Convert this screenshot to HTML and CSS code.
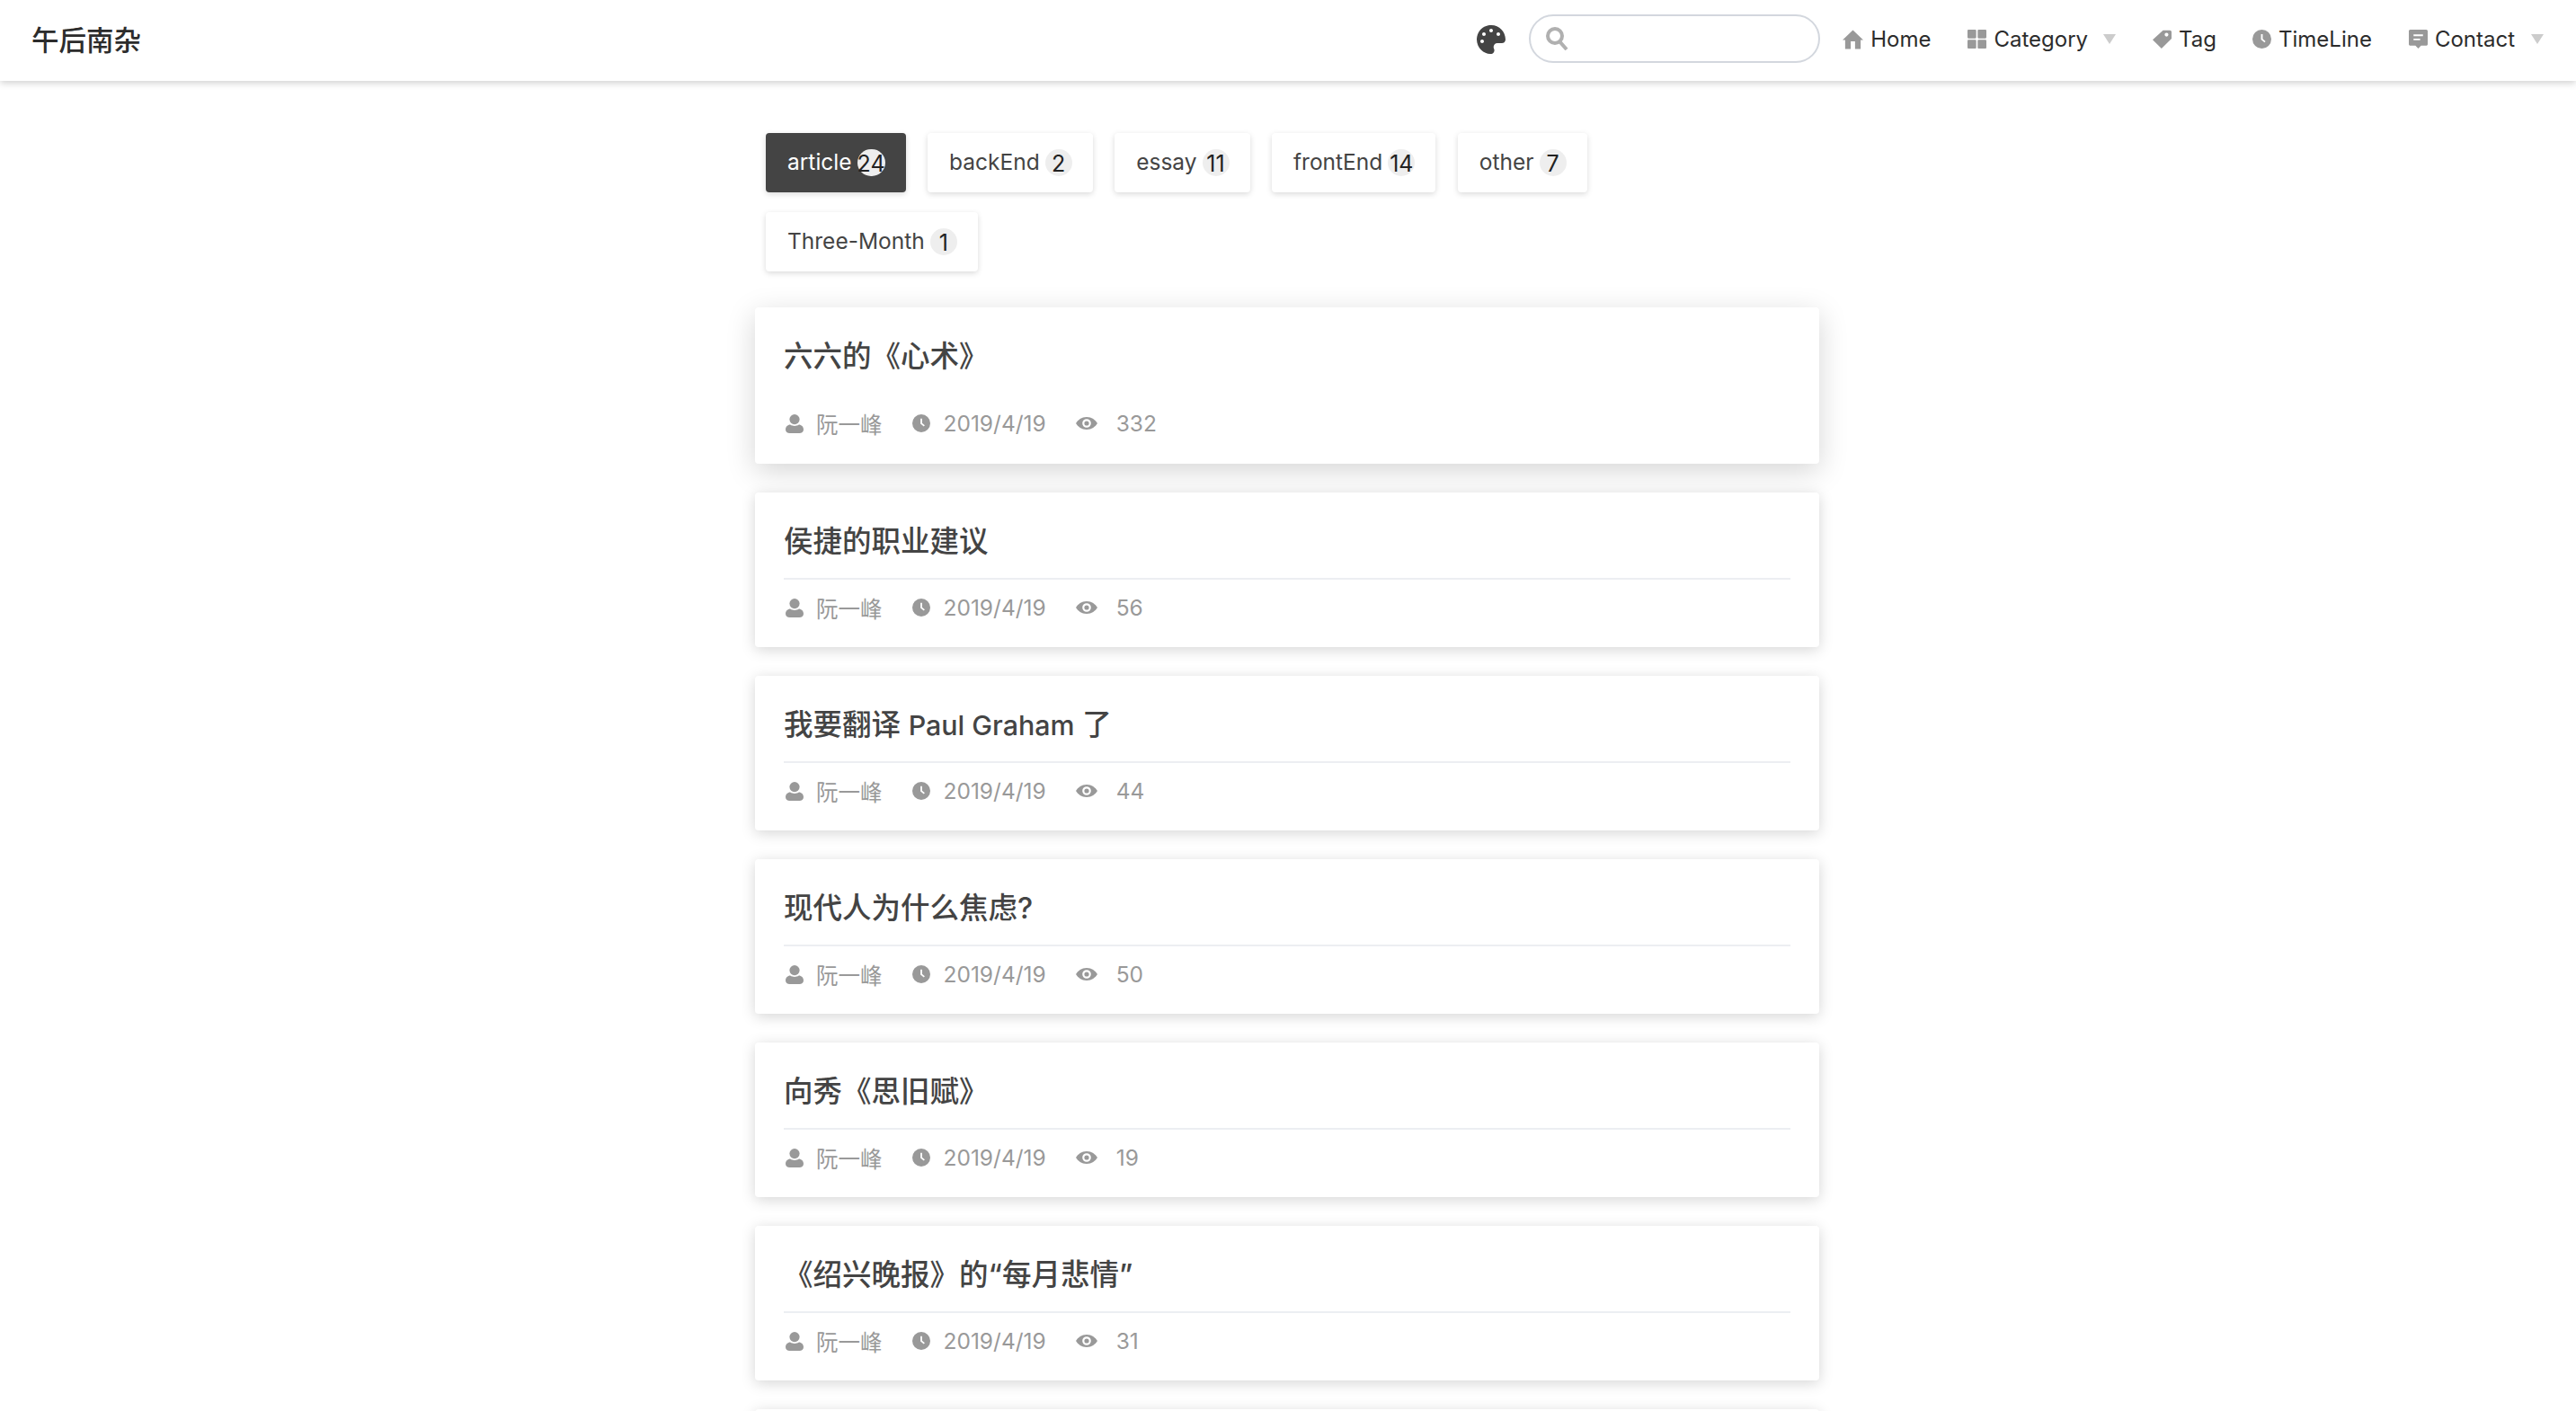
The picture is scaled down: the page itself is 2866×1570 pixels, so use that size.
FILE: index.html
```html
<!DOCTYPE html>
<html lang="en">
<head>
    <meta charset="UTF-8">
    <meta name="viewport" content="width=device-width, initial-scale=1.0">
    <title>午后南杂</title>
    <link rel="stylesheet" href="styles.css">
</head>
<body>
    <svg class="icon-defs" width="0" height="0">
        <symbol id="i-user" viewBox="0 0 20 21"><circle cx="10" cy="5.600" r="5.600"/><path d="M0 17C0 14 2.500 11.600 5.200 11.600c1.500 1 3.100 1.400 4.800 1.400s3.300-.4 4.800-1.400c2.700 0 5.200 2.400 5.200 5.400 0 2.600-2.200 4-4.500 4h-11C2.200 21 0 19.600 0 17z"/></symbol>
        <symbol id="i-clock" viewBox="0 0 20 20"><path fill-rule="evenodd" d="M10 0a10 10 0 1 1 0 20a10 10 0 0 1 0-20zM9.100 4.800v5.700l3.700 3.100l1.100-1.300l-3-2.600V4.800z"/></symbol>
        <symbol id="i-eye" viewBox="0 0 24 14"><path fill-rule="evenodd" d="M12 0c5.500 0 9.800 3.300 12 7c-2.200 3.700-6.500 7-12 7S2.200 10.700 0 7c2.200-3.700 6.500-7 12-7zM12 2.200a4.800 4.800 0 1 0 0 9.600a4.800 4.800 0 0 0 0-9.600zM12 4.400a2.600 2.600 0 1 1 0 5.200a2.600 2.600 0 0 1 0-5.200z"/></symbol>
        <symbol id="i-home" viewBox="0 0 24 22"><path fill-rule="evenodd" d="M12 0l12 11.500h-3V22H3V11.500H0zM9.500 13v9h5v-9z"/></symbol>
        <symbol id="i-grid" viewBox="0 0 20 20"><rect width="9.200" height="9.200" rx="1"/><rect x="10.800" width="9.200" height="9.200" rx="1"/><rect y="10.800" width="9.200" height="9.200" rx="1"/><rect x="10.800" y="10.800" width="9.200" height="9.200" rx="1"/></symbol>
        <symbol id="i-tag" viewBox="0 0 20 20"><path fill-rule="evenodd" d="M11 .6h7.200c1 0 1.800.8 1.800 1.800V9.600L9.400 20L0 10.800zM14.700 3.300a2 2 0 1 0 0 4a2 2 0 0 0 0-4z"/></symbol>
        <symbol id="i-chat" viewBox="0 0 20 20"><path fill-rule="evenodd" d="M1.500 0h17C19.300 0 20 .7 20 1.500v14c0 .8-.7 1.500-1.500 1.500H13l-3 3l-3-3H1.500C.7 17 0 16.300 0 15.500v-14C0 .7.700 0 1.500 0zM5 5v1.800h10V5zM5 9.500v1.800h7V9.500z"/></symbol>
    </svg>

    <div class="navbar">
        <div class="brand">午后南杂</div>
        <div class="nav-right">
            <svg class="palette" viewBox="0 0 512 512"><path d="M204.300 5C104.900 24.400 24.800 104.300 5.200 203.400c-37 187 131.700 326.400 258.800 306.700 41.200-6.400 61.400-54.600 42.500-91.700-23.100-45.400 9.900-98.400 60.900-98.400h79.700c35.800 0 64.800-29.600 64.900-65.300C511.500 97.100 368.100-26.900 204.300 5zM96 320c-17.700 0-32-14.300-32-32s14.300-32 32-32 32 14.300 32 32-14.300 32-32 32zm32-128c-17.700 0-32-14.300-32-32s14.300-32 32-32 32 14.300 32 32-14.300 32-32 32zm128-64c-17.700 0-32-14.300-32-32s14.300-32 32-32 32 14.300 32 32-14.300 32-32 32zm128 64c-17.700 0-32-14.300-32-32s14.300-32 32-32 32 14.300 32 32-14.300 32-32 32z"/></svg>
            <div class="search">
                <svg class="search-icon" viewBox="0 0 25 26"><circle cx="10" cy="10" r="8" fill="none" stroke-width="4"/><path d="M15.500 16.500L23 25" fill="none" stroke-width="4"/></svg>
            </div>
            <div class="nav-item nav-home"><svg class="nav-icon"><use href="#i-home"/></svg>Home</div>
            <div class="nav-item nav-category"><svg class="nav-icon"><use href="#i-grid"/></svg>Category<span class="caret"></span></div>
            <div class="nav-item nav-tag"><svg class="nav-icon"><use href="#i-tag"/></svg>Tag</div>
            <div class="nav-item nav-time"><svg class="nav-icon"><use href="#i-clock"/></svg>TimeLine</div>
            <div class="nav-item nav-contact"><svg class="nav-icon"><use href="#i-chat"/></svg>Contact<span class="caret"></span></div>
        </div>
    </div>

    <div class="container">
        <div class="tags">
            <div class="tag active">article<span class="count">24</span></div>
            <div class="tag">backEnd<span class="count">2</span></div>
            <div class="tag">essay<span class="count">11</span></div>
            <div class="tag">frontEnd<span class="count">14</span></div>
            <div class="tag">other<span class="count">7</span></div>
            <div class="tag">Three-Month<span class="count">1</span></div>
        </div>

        <div class="post first">
            <div class="post-title">六六的《心术》</div>
            <div class="post-meta">
                <span class="meta-author"><svg class="meta-icon"><use href="#i-user"/></svg>阮一峰</span>
                <span class="meta-date"><svg class="meta-icon"><use href="#i-clock"/></svg>2019/4/19</span>
                <span class="meta-views"><svg class="meta-icon eye"><use href="#i-eye"/></svg>332</span>
            </div>
        </div>
        <div class="post">
            <div class="post-title">侯捷的职业建议</div>
            <div class="post-meta">
                <span class="meta-author"><svg class="meta-icon"><use href="#i-user"/></svg>阮一峰</span>
                <span class="meta-date"><svg class="meta-icon"><use href="#i-clock"/></svg>2019/4/19</span>
                <span class="meta-views"><svg class="meta-icon eye"><use href="#i-eye"/></svg>56</span>
            </div>
        </div>
        <div class="post">
            <div class="post-title">我要翻译 <span class="latin">Paul Graham</span> 了</div>
            <div class="post-meta">
                <span class="meta-author"><svg class="meta-icon"><use href="#i-user"/></svg>阮一峰</span>
                <span class="meta-date"><svg class="meta-icon"><use href="#i-clock"/></svg>2019/4/19</span>
                <span class="meta-views"><svg class="meta-icon eye"><use href="#i-eye"/></svg>44</span>
            </div>
        </div>
        <div class="post">
            <div class="post-title">现代人为什么焦虑?</div>
            <div class="post-meta">
                <span class="meta-author"><svg class="meta-icon"><use href="#i-user"/></svg>阮一峰</span>
                <span class="meta-date"><svg class="meta-icon"><use href="#i-clock"/></svg>2019/4/19</span>
                <span class="meta-views"><svg class="meta-icon eye"><use href="#i-eye"/></svg>50</span>
            </div>
        </div>
        <div class="post">
            <div class="post-title">向秀《思旧赋》</div>
            <div class="post-meta">
                <span class="meta-author"><svg class="meta-icon"><use href="#i-user"/></svg>阮一峰</span>
                <span class="meta-date"><svg class="meta-icon"><use href="#i-clock"/></svg>2019/4/19</span>
                <span class="meta-views"><svg class="meta-icon eye"><use href="#i-eye"/></svg>19</span>
            </div>
        </div>
        <div class="post">
            <div class="post-title">《绍兴晚报》的“每月悲情”</div>
            <div class="post-meta">
                <span class="meta-author"><svg class="meta-icon"><use href="#i-user"/></svg>阮一峰</span>
                <span class="meta-date"><svg class="meta-icon"><use href="#i-clock"/></svg>2019/4/19</span>
                <span class="meta-views"><svg class="meta-icon eye"><use href="#i-eye"/></svg>31</span>
            </div>
        </div>
        <div class="post">
            <div class="post-title">&nbsp;</div>
        </div>
    </div>
</body>
</html>
```

FILE: styles.css
```css
* {
    margin: 0;
    padding: 0;
    box-sizing: border-box;
}

html, body {
    height: 1570px;
    overflow: hidden;
}

body {
    font-family: Inter, "Noto Sans CJK SC", sans-serif;
    background: #fff;
    color: #3f3f3f;
}

.icon-defs {
    position: absolute;
}

.navbar {
    height: 90px;
    display: flex;
    align-items: center;
    justify-content: space-between;
    padding-left: 35px;
    padding-bottom: 5px;
    background: #fff;
    box-shadow: 0 2px 8px rgba(0,0,0,0.2);
}

.brand {
    font-size: 30.500px;
    font-weight: 500;
    color: #2c2c2c;
}

.nav-right {
    display: flex;
    align-items: center;
}

.palette {
    width: 32px;
    height: 32px;
    margin-top: 3px;
    margin-right: 26px;
    fill: #444;
}

.search {
    width: 324px;
    height: 54px;
    display: flex;
    align-items: center;
    padding-left: 17px;
    border: 2px solid #d3d7de;
    border-radius: 27px;
    margin-right: 25px;
}

.search-icon {
    width: 25px;
    height: 26px;
    stroke: #b0b0b0;
}

.nav-item {
    display: flex;
    align-items: center;
    margin-top: 2px;
    font-size: 24px;
    color: #2c2c2c;
}

.nav-icon {
    width: 21px;
    height: 21px;
    margin-right: 8px;
    fill: #999;
}

.nav-home .nav-icon {
    width: 23px;
    height: 22px;
}

.nav-time {
    margin-left: 40px;
}

.nav-category, .nav-contact {
    margin-left: 41px;
}

.caret {
    width: 0;
    height: 0;
    margin-left: 17px;
    margin-right: 13px;
    border-left: 7px solid transparent;
    border-right: 7px solid transparent;
    border-top: 11px solid #ccc;
}

.nav-contact .caret {
    margin-left: 18px;
    margin-right: 36px;
}

.nav-tag {
    margin-left: 28px;
}

.container {
    width: 1184px;
    margin-left: 840px;
}

.tags {
    display: flex;
    flex-wrap: wrap;
    gap: 22px 24.500px;
    padding: 58px 12px 0;
}

.tag {
    height: 66px;
    display: flex;
    align-items: center;
    padding: 0 23px 2px 24px;
    background: #fff;
    border-radius: 4px;
    box-shadow: 0 2px 6px rgba(0,0,0,0.15);
    font-size: 24.500px;
    color: #444;
}

.tag.active {
    background: #444;
    color: #fff;
}

.count {
    min-width: 30px;
    height: 30px;
    margin-top: 2px;
    margin-left: 6px;
    border-radius: 15px;
    background: #eee;
    color: #222;
    font-size: 25px;
    line-height: 32px;
    text-align: center;
}

.post {
    height: 172px;
    margin-bottom: 32px;
    padding: 0 32px;
    background: #fff;
    border-radius: 4px;
    box-shadow: 0 3px 16px rgba(0,0,0,0.17);
}

.post.first {
    height: 174px;
    margin-top: 40px;
    box-shadow: 0 8px 32px rgba(0,0,0,0.17);
}

.post-title {
    height: 97px;
    padding-top: 33px;
    border-bottom: 2px solid #eceef2;
    font-size: 32.500px;
    font-weight: 500;
    line-height: 44px;
    color: #444;
}

.post.first .post-title {
    border-bottom-color: transparent;
}

.latin {
    font-size: 30.400px;
}

.post-meta {
    display: flex;
    align-items: center;
    height: 62px;
    font-size: 24.500px;
    color: #999;
}

.post.first .post-meta {
    padding-top: 2px;
}

.post-meta span {
    display: flex;
    align-items: center;
}

.meta-icon {
    width: 20px;
    height: 21px;
    margin-left: 2px;
    margin-right: 14px;
    fill: #999;
}

.meta-date .meta-icon {
    height: 20px;
    margin-right: 15px;
}

.meta-icon.eye {
    width: 24px;
    height: 14px;
    margin-right: 21px;
}

.meta-date {
    margin-left: 31px;
}

.meta-views {
    margin-left: 31px;
}
```
